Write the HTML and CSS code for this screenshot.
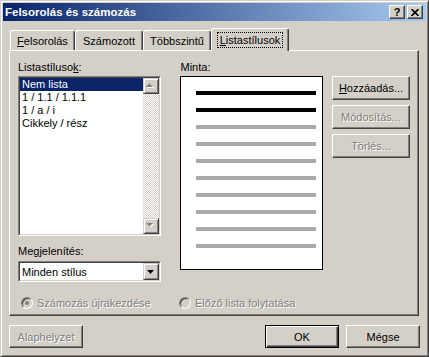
FILE: index.html
```html
<!DOCTYPE html>
<html lang="hu">
<head>
    <meta charset="UTF-8">
    <title>Felsorolás és számozás</title>
    <link rel="stylesheet" href="styles.css">
</head>
<body>
    <div class="window">
        <div class="titlebar">
            <span class="title">Felsorolás és számozás</span>
            <div class="title-buttons">
                <button class="tbtn">?</button>
                <button class="tbtn">
                    <svg width="8" height="7" viewBox="0 0 8 7"><path d="M0.5 0 L7.5 7 M7.5 0 L0.5 7" stroke="#000" stroke-width="1.6"/></svg>
                </button>
            </div>
        </div>

        <div class="content">
            <div class="tabs">
                <div class="tab tab-1"><span><u>F</u>elsorolás</span></div>
                <div class="tab tab-2"><span>Számozott</span></div>
                <div class="tab tab-3"><span>Többszintű</span></div>
                <div class="tab tab-active"><span class="focus"><u>L</u>istastílusok</span></div>
            </div>

            <div class="panel">
                <div class="main">
                    <div class="col-left">
                        <div class="label">Listastíluso<u>k</u>:</div>
                        <div class="listbox">
                            <div class="listbox-in">
                                <div class="items">
                                    <div class="item selected">Nem lista</div>
                                    <div class="item">1 / 1.1 / 1.1.1</div>
                                    <div class="item">1 / a / i</div>
                                    <div class="item">Cikkely / rész</div>
                                </div>
                                <div class="scrollbar">
                                    <div class="sbtn">
                                        <svg width="9" height="6" viewBox="0 0 9 6"><polygon points="1,5 8,5 4.5,1.5" fill="#fff"/><polygon points="0,4 7,4 3.5,0.5" fill="#808080"/></svg>
                                    </div>
                                    <div class="track"></div>
                                    <div class="sbtn">
                                        <svg width="9" height="6" viewBox="0 0 9 6"><polygon points="1,1 8,1 4.5,4.5" fill="#fff"/><polygon points="0,0 7,0 3.5,3.5" fill="#808080"/></svg>
                                    </div>
                                </div>
                            </div>
                        </div>
                        <div class="label label-gap">Me<u>g</u>jelenítés:</div>
                        <div class="select">
                            <div class="select-in">
                                <span class="select-text">Minden stílus</span>
                                <div class="sbtn select-btn">
                                    <svg width="7" height="4" viewBox="0 0 7 4"><polygon points="0,0 7,0 3.5,4" fill="#000"/></svg>
                                </div>
                            </div>
                        </div>
                    </div>

                    <div class="col-mid">
                        <div class="label label-minta">Minta:</div>
                        <div class="preview">
                            <div class="line dark"></div>
                            <div class="line dark"></div>
                            <div class="line"></div>
                            <div class="line"></div>
                            <div class="line"></div>
                            <div class="line"></div>
                            <div class="line"></div>
                            <div class="line"></div>
                            <div class="line"></div>
                            <div class="line"></div>
                        </div>
                    </div>

                    <div class="col-right">
                        <button class="btn"><u>H</u>ozzáadás...</button>
                        <button class="btn disabled">Módosítás...</button>
                        <button class="btn disabled">Törlés...</button>
                    </div>
                </div>

                <div class="radios">
                    <div class="radio disabled first"><span class="circle checked"></span>Számozás újrakezdése</div>
                    <div class="radio disabled"><span class="circle"></span>Előző lista folytatása</div>
                </div>
            </div>

            <div class="footer">
                <button class="btn disabled btn-wide">Alaphelyzet</button>
                <div class="footer-right">
                    <button class="btn btn-default btn-wide">OK</button>
                    <button class="btn btn-wide">Mégse</button>
                </div>
            </div>
        </div>
    </div>
</body>
</html>
```

FILE: styles.css
```css
* {
    margin: 0;
    padding: 0;
    box-sizing: border-box;
}

body {
    background: #d4d0c8;
    font-family: 'Liberation Sans', Arial, sans-serif;
    font-size: 11px;
    color: #000;
}

u {
    text-decoration: underline;
    text-underline-offset: 1px;
}

/* window frame */
.window {
    width: 429px;
    height: 357px;
    background: #d4d0c8;
    border: 1px solid;
    border-color: #d4d0c8 #404040 #404040 #d4d0c8;
    box-shadow: inset 1px 1px #fff, inset -1px -1px #808080;
    padding: 2px;
    display: flex;
    flex-direction: column;
}

.titlebar {
    height: 18px;
    display: flex;
    align-items: center;
    justify-content: space-between;
    padding: 0 3px 0 2px;
    background: linear-gradient(to right, #0a246a, #a6caf0);
}

.title {
    color: #fff;
    font-weight: bold;
    font-size: 11.5px;
}

.title-buttons {
    display: flex;
    gap: 2px;
}

.tbtn {
    width: 16px;
    height: 14px;
    display: flex;
    align-items: center;
    justify-content: center;
    font-family: inherit;
    font-size: 11px;
    font-weight: bold;
    line-height: 1;
    background: #d4d0c8;
    border: 1px solid;
    border-color: #fff #404040 #404040 #fff;
    box-shadow: inset -1px -1px #808080;
}

/* tabs */
.content {
    padding: 7px 7px 0 6px;
}

.tabs {
    display: flex;
    height: 22px;
    padding-left: 1px;
    position: relative;
    z-index: 1;
}

.tab {
    height: 20px;
    margin-top: 2px;
    display: flex;
    align-items: center;
    justify-content: center;
    background: #d4d0c8;
    border-top: 1px solid #fff;
    border-left: 1px solid #fff;
    border-right: 1px solid #404040;
    box-shadow: inset -1px 0 #808080;
    border-radius: 3px 3px 0 0;
    padding-top: 1px;
}

.tab-1 { width: 65px; }
.tab-2 { width: 68px; }
.tab-3 { width: 68px; }

.tab-active {
    width: 78px;
    height: 23px;
    margin-top: 0;
    padding-top: 0;
}

.focus {
    outline: 1px dotted #000;
    outline-offset: 1px;
    padding: 0 1px;
}

/* panel */
.panel {
    width: 410px;
    height: 266px;
    border: 1px solid;
    border-color: #fff #404040 #404040 #fff;
    box-shadow: inset -1px -1px #808080;
    padding: 10px 8px 0 8px;
}

.main {
    display: flex;
}

.label {
    height: 13px;
    line-height: 13px;
    margin-bottom: 2px;
}

.label-gap {
    margin-top: 9px;
    margin-bottom: 3px;
}

.label-minta {
    padding-left: 1px;
}

.col-left {
    width: 143px;
}

.col-mid {
    width: 144px;
    margin-left: 19px;
}

.col-right {
    margin-left: 9px;
    padding-top: 15px;
    display: flex;
    flex-direction: column;
    gap: 5px;
}

/* list box */
.listbox,
.select {
    border: 1px solid;
    border-color: #808080 #fff #fff #808080;
}

.listbox-in,
.select-in {
    border: 1px solid;
    border-color: #404040 #d4d0c8 #d4d0c8 #404040;
    background: #fff;
    display: flex;
}

.listbox-in {
    height: 158px;
}

.items {
    flex: 1;
}

.item {
    height: 13px;
    line-height: 13px;
    padding-left: 2px;
    white-space: nowrap;
}

.item.selected {
    background: #0a246a;
    color: #fff;
}

.scrollbar {
    width: 16px;
    display: flex;
    flex-direction: column;
}

.sbtn {
    width: 16px;
    height: 16px;
    display: flex;
    align-items: center;
    justify-content: center;
    background: #d4d0c8;
    border: 1px solid;
    border-color: #d4d0c8 #404040 #404040 #d4d0c8;
    box-shadow: inset 1px 1px #fff, inset -1px -1px #808080;
}

.track {
    flex: 1;
    background: repeating-conic-gradient(#fff 0 25%, #d4d0c8 0 50%) 0 0 / 2px 2px;
}

/* dropdown */
.select-in {
    height: 19px;
    align-items: center;
}

.select-text {
    flex: 1;
    padding-left: 2px;
}

.select-btn {
    height: 17px;
}

/* preview */
.preview {
    height: 194px;
    border: 1px solid #000;
    background: #fff;
    padding: 14px 0 0 15px;
    display: flex;
    flex-direction: column;
    gap: 13px;
}

.line {
    width: 120px;
    height: 4px;
    background: #a9a9a9;
}

.line.dark {
    background: #000;
}

/* buttons */
.btn {
    width: 78px;
    height: 24px;
    font-family: inherit;
    font-size: 11px;
    background: #d4d0c8;
    border: 1px solid;
    border-color: #fff #404040 #404040 #fff;
    box-shadow: inset -1px -1px #808080;
}

.btn-wide {
    width: 74px;
    height: 23px;
}

.btn-default {
    border-color: #000;
    box-shadow: inset 1px 1px #fff, inset -1px -1px #404040, inset -2px -2px #808080;
}

.disabled {
    color: #808080;
    text-shadow: 1px 1px #fff;
}

/* radios */
.radios {
    display: flex;
    margin-top: 14px;
    padding-left: 3px;
}

.radio {
    display: flex;
    align-items: center;
    gap: 4px;
    height: 13px;
}

.radio.first {
    width: 158px;
}

.circle {
    width: 12px;
    height: 12px;
    border-radius: 50%;
    border: 1px solid;
    border-color: #808080 #fff #fff #808080;
    box-shadow: inset 1px 1px #404040, inset -1px -1px #d4d0c8;
    background: #d4d0c8;
    display: flex;
    align-items: center;
    justify-content: center;
}

.circle.checked::after {
    content: "";
    width: 4px;
    height: 4px;
    border-radius: 50%;
    background: #808080;
}

/* footer */
.footer {
    display: flex;
    justify-content: space-between;
    margin-top: 9px;
    width: 411px;
}

.footer-right {
    display: flex;
    gap: 7px;
}
```
